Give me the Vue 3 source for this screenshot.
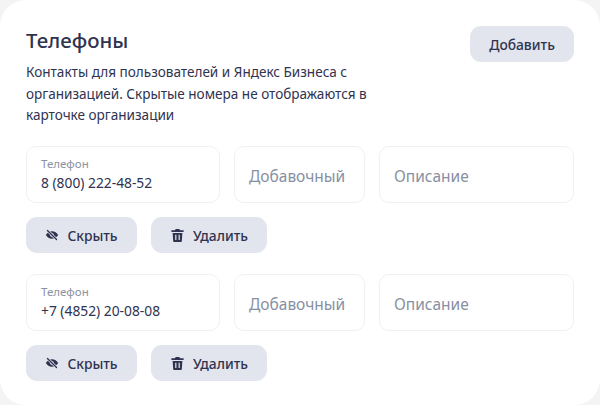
<template>
  <div class="card">
    <div class="head">
      <div class="head-text">
        <h2 class="title">Телефоны</h2>
        <p class="desc">Контакты для пользователей и Яндекс Бизнеса с организацией. Скрытые номера не отображаются в карточке организации</p>
      </div>
      <button class="btn add">Добавить</button>
    </div>

    <div v-for="phone in phones" :key="phone" class="phone">
      <div class="fields">
        <div class="field main">
          <span class="label">Телефон</span>
          <span class="value">{{ phone }}</span>
        </div>
        <div class="field ext"><span class="placeholder">Добавочный</span></div>
        <div class="field note"><span class="placeholder">Описание</span></div>
      </div>
      <div class="actions">
        <button class="btn hide">
          <svg class="icon" viewBox="0 0 16 16" width="14" height="14">
            <path d="M1 8C2.400 5.400 5 3.800 8 3.800s5.600 1.600 7 4.200c-1.400 2.600-4 4.200-7 4.200S2.400 10.600 1 8z" fill="#2f3350"/>
            <circle cx="8" cy="8" r="2.100" fill="#e2e5ed"/>
            <path d="M2.800 2.800l10.400 10.400" stroke="#e2e5ed" stroke-width="3"/>
            <path d="M2.800 2.800l10.400 10.400" stroke="#2f3350" stroke-width="1.500" stroke-linecap="round"/>
          </svg>
          Скрыть
        </button>
        <button class="btn del">
          <svg class="icon" viewBox="0 0 16 16" width="15" height="15">
            <path d="M6 1h4l.7 1.500H14.500v1.700H1.500V2.500h3.800z" fill="#2f3350"/>
            <path d="M2.800 5.200h10.400l-.6 8.600c0 .7-.6 1.200-1.200 1.200H4.600c-.6 0-1.200-.5-1.200-1.200z" fill="#2f3350"/>
            <path d="M6.200 7.300v5.400M9.800 7.300v5.400" stroke="#e2e5ed" stroke-width="1.300"/>
          </svg>
          Удалить
        </button>
      </div>
    </div>
  </div>
</template>

<script setup>
const phones = ['8 (800) 222-48-52', '+7 (4852) 20-08-08']
</script>

<style>
html, body {
  margin: 0;
  background: #f4f4f5;
}
</style>

<style scoped>
.card {
  width: 600px;
  height: 405px;
  box-sizing: border-box;
  padding: 26px 26px 0;
  background: #fff;
  border-radius: 26px;
  font-family: "Noto Sans", "Liberation Sans", sans-serif;
  color: #2f3350;
}

.head {
  display: flex;
  justify-content: space-between;
  align-items: flex-start;
  height: 120px;
}

.head-text {
  width: 350px;
}

.title {
  margin: 0;
  font-size: 20.400px;
  font-weight: 500;
  line-height: 28px;
}

.desc {
  margin: 8px 0 0;
  font-size: 13.550px;
  line-height: 21.500px;
}

.btn {
  display: flex;
  align-items: center;
  justify-content: center;
  height: 36px;
  padding: 0;
  border: 0;
  border-radius: 11px;
  background: #e2e5ed;
  color: #2f3350;
  font-family: inherit;
  font-size: 13.800px;
  font-weight: 500;
}

.add {
  width: 104px;
}

.phone {
  margin-bottom: 21px;
}

.fields {
  display: flex;
  gap: 14px;
}

.field {
  box-sizing: border-box;
  height: 57px;
  display: flex;
  flex-direction: column;
  justify-content: center;
  padding: 0 14px;
  border: 1px solid #eef0f5;
  border-radius: 10px;
}

.main {
  width: 194px;
}

.ext {
  width: 131px;
}

.note {
  width: 195px;
}

.label {
  font-size: 11.500px;
  line-height: 15px;
  color: #8d92a3;
}

.value {
  margin-top: 2px;
  font-size: 13.800px;
  line-height: 20px;
}

.placeholder {
  padding-top: 2px;
  font-size: 15.500px;
  color: #8790a3;
}

.actions {
  display: flex;
  gap: 14px;
  margin-top: 14px;
}

.hide {
  width: 111px;
}

.del {
  width: 116px;
}

.icon {
  margin-right: 8px;
  flex: none;
}
</style>
